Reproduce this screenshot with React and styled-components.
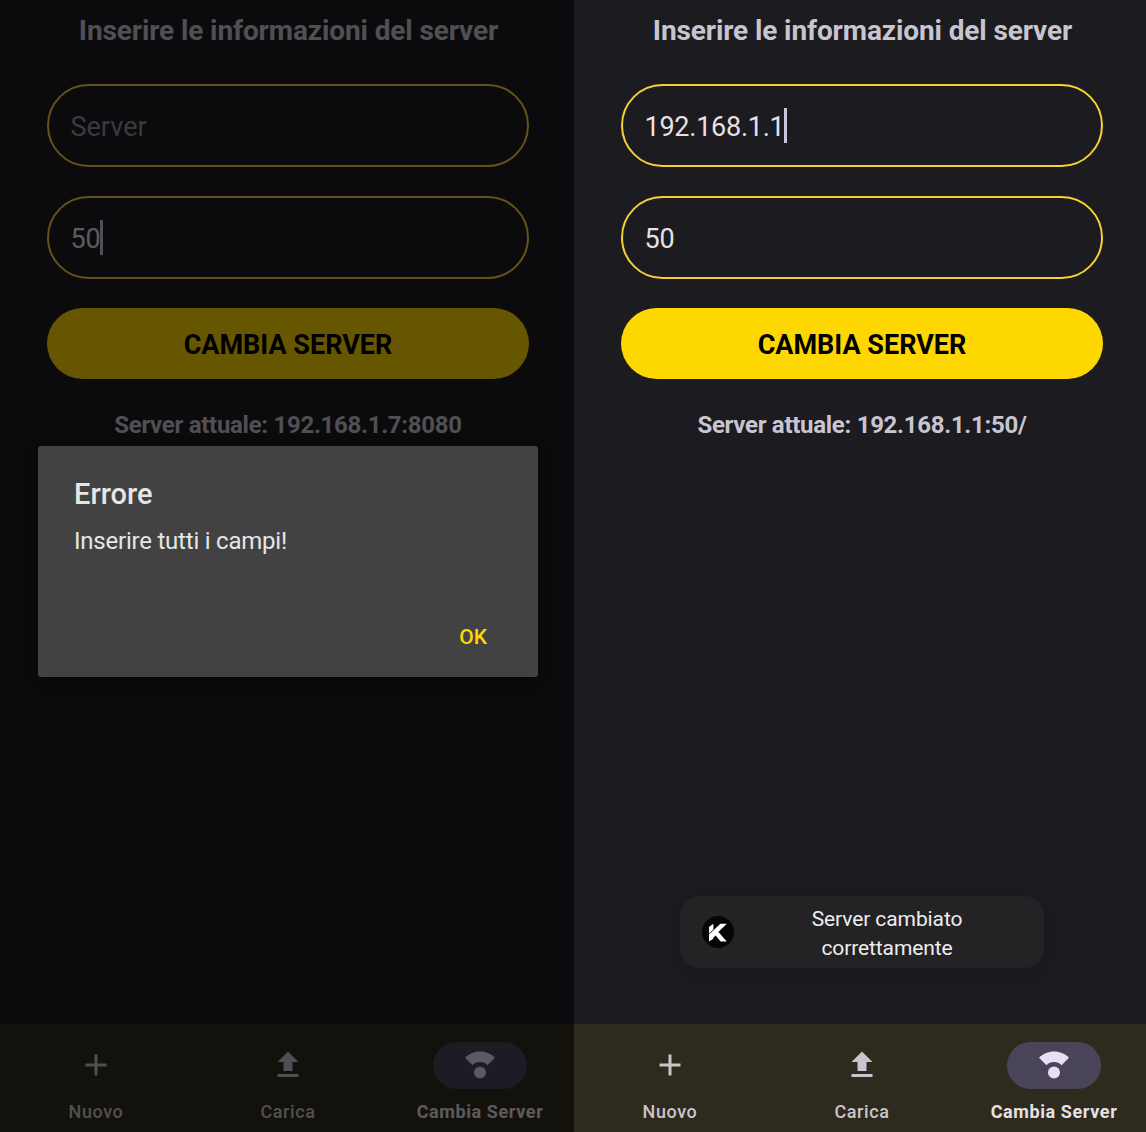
import React from "react";
import styled, { createGlobalStyle, css } from "styled-components";

const GlobalStyle = createGlobalStyle`
  *, *::before, *::after { box-sizing: border-box; }
  html, body { margin: 0; padding: 0; background: #1c1b1f; }
  body { overflow: hidden; font-family: Roboto, "Liberation Sans", sans-serif; }
  button, h1, h2, p { margin: 0; }
  button { font-family: inherit; border: 0; }
`;

const Board = styled.main`
  display: flex;
  width: 1146px;
  height: 1132px;
  overflow: hidden;
`;

const Viewport = styled.section`
  position: relative;
  flex: 0 0 ${(p) => p.$width}px;
  height: 100%;
  overflow: hidden;
`;

const Screen = styled.div`
  display: flex;
  flex-direction: column;
  width: 576px;
  height: 100%;
  background: #1c1b1f;
`;

const Form = styled.div`
  flex: 1;
  display: flex;
  flex-direction: column;
  align-items: stretch;
  padding: 13px 47px 0;
`;

const Title = styled.h1`
  height: 36px;
  line-height: 36px;
  margin-bottom: 35px;
  padding-left: 1px;
  font-size: 28px;
  font-weight: 700;
  letter-spacing: -0.11px;
  text-align: center;
  white-space: nowrap;
  color: #c9c5d0;
`;

const Field = styled.div`
  display: flex;
  align-items: center;
  height: 83px;
  margin-bottom: 29px;
  padding: 2px 0 0 21.5px;
  border: 2px solid #f7d038;
  border-radius: 42px;
  font-size: 27px;
  line-height: 36px;
  letter-spacing: ${(p) => (p.$placeholder ? "0" : "-0.25px")};
  color: ${(p) => (p.$placeholder ? "#938f99" : "#e6e1e5")};
`;

const Caret = styled.span`
  width: 3px;
  height: 35px;
  margin: 0 0 2px -0.5px;
  background: #cac4e0;
`;

const Submit = styled.button`
  height: 70.5px;
  padding: 3px 0 0;
  border-radius: 36px;
  background: #ffd700;
  color: #000;
  font-size: 27px;
  font-weight: 700;
  text-align: center;
`;

const Status = styled.p`
  margin-top: 31.5px;
  font-size: 24px;
  line-height: 30px;
  font-weight: 700;
  letter-spacing: -0.29px;
  text-align: center;
  white-space: nowrap;
  color: #c9c5d0;
`;

const NavBar = styled.nav`
  display: grid;
  grid-template-columns: repeat(3, 1fr);
  height: 108px;
  padding-top: 18px;
  background: #2e2b1e;
`;

const NavItem = styled.div`
  display: flex;
  flex-direction: column;
  align-items: center;
  gap: 12px;
  font-size: 18px;
  line-height: 22px;
  letter-spacing: 0.6px;
  font-weight: 500;
  color: #cac5cd;
  white-space: nowrap;
  ${(p) =>
    p.$active &&
    css`
      color: #e6e1e5;
      font-weight: 700;
    `}
`;

const IconPill = styled.span`
  display: flex;
  align-items: center;
  justify-content: center;
  width: 94px;
  height: 47px;
  padding-bottom: 1px;
  border-radius: 24px;
  color: ${(p) => (p.$active ? "#e8def8" : "#cac4d0")};
  background: ${(p) => (p.$active ? "#4a4458" : "transparent")};
`;

const Scrim = styled.div`
  position: absolute;
  inset: 0;
  display: flex;
  align-items: flex-start;
  padding: 446px 0 0 38px;
  background: rgba(0, 0, 0, 0.6);
`;

const Dialog = styled.div`
  display: flex;
  flex-direction: column;
  width: 500px;
  height: 231px;
  padding: 30px 36px 23px;
  border-radius: 3px;
  background: #424242;
  box-shadow: 0 4px 14px rgba(0, 0, 0, 0.4);
`;

const DialogTitle = styled.h2`
  font-size: 29px;
  line-height: 36px;
  font-weight: 500;
  color: #e6e6e6;
`;

const DialogText = styled.p`
  margin-top: 14px;
  font-size: 24px;
  line-height: 30px;
  letter-spacing: -0.22px;
  color: #e6e6e6;
`;

const DialogAction = styled.button`
  align-self: flex-end;
  margin-top: auto;
  padding: 0 15px;
  background: none;
  font-size: 21px;
  line-height: 34px;
  font-weight: 500;
  color: #ffd700;
`;

const Toast = styled.div`
  position: absolute;
  left: 106px;
  top: 896px;
  display: flex;
  align-items: center;
  width: 364px;
  height: 72px;
  padding-left: 22px;
  border-radius: 20px;
  background: #232325;
  box-shadow: 0 6px 20px rgba(0, 0, 0, 0.06);
`;

const ToastText = styled.p`
  width: 200px;
  margin-left: 53px;
  padding-top: 3px;
  font-size: 21px;
  line-height: 29px;
  letter-spacing: -0.1px;
  text-align: center;
  color: #f0ecee;
`;

const PlusIcon = () => (
  <svg width="36" height="36" viewBox="0 0 24 24" fill="currentColor">
    <path d="M19 13h-6v6h-2v-6H5v-2h6V5h2v6h6v2z" />
  </svg>
);

const UploadIcon = () => (
  <svg width="36" height="36" viewBox="0 0 24 24" fill="currentColor">
    <path d="M9 16h6v-6h4l-7-7-7 7h4zM5 18h14v2H5z" />
  </svg>
);

const SignalIcon = () => (
  <svg width="36" height="36" viewBox="0 0 24 24" fill="currentColor">
    <circle cx="12" cy="17" r="4" />
    <path d="M12 3C8.1 3 4.56 4.59 2 7.15l5 5c1.28-1.28 3.05-2.08 5-2.08s3.72.79 5 2.07l5-5C19.44 4.59 15.9 3 12 3z" />
  </svg>
);

const AppLogo = () => (
  <svg width="32" height="32" viewBox="0 0 32 32">
    <circle cx="16" cy="16" r="16" fill="#050608" />
    <path d="M7 11 11.4 7.8V13.4L7 17.4z" fill="#fff" />
    <path d="M7 18.6 18.4 7.8h6.4L16.4 16l8.4 9.4h-6.2l-4.9-5.9-2.4 2.3v1L7 25.4z" fill="#fff" />
  </svg>
);

const tabs = [
  { label: "Nuovo", Icon: PlusIcon },
  { label: "Carica", Icon: UploadIcon },
  { label: "Cambia Server", Icon: SignalIcon, active: true },
];

function ServerScreen({ host, port, focus, current }) {
  return (
    <Screen>
      <Form>
        <Title>Inserire le informazioni del server</Title>
        <Field $placeholder={!host}>
          {host || "Server"}
          {focus === "host" && <Caret />}
        </Field>
        <Field>
          {port}
          {focus === "port" && <Caret />}
        </Field>
        <Submit>CAMBIA SERVER</Submit>
        <Status>Server attuale: {current}</Status>
      </Form>
      <NavBar>
        {tabs.map(({ label, Icon, active }) => (
          <NavItem key={label} $active={active}>
            <IconPill $active={active}>
              <Icon />
            </IconPill>
            {label}
          </NavItem>
        ))}
      </NavBar>
    </Screen>
  );
}

export default function App() {
  return (
    <>
      <GlobalStyle />
      <Board>
        <Viewport $width={574}>
          <ServerScreen port="50" focus="port" current="192.168.1.7:8080" />
          <Scrim>
            <Dialog>
              <DialogTitle>Errore</DialogTitle>
              <DialogText>Inserire tutti i campi!</DialogText>
              <DialogAction>OK</DialogAction>
            </Dialog>
          </Scrim>
        </Viewport>
        <Viewport $width={572}>
          <ServerScreen host="192.168.1.1" port="50" focus="host" current="192.168.1.1:50/" />
          <Toast>
            <AppLogo />
            <ToastText>
              Server cambiato
              <br />
              correttamente
            </ToastText>
          </Toast>
        </Viewport>
      </Board>
    </>
  );
}
